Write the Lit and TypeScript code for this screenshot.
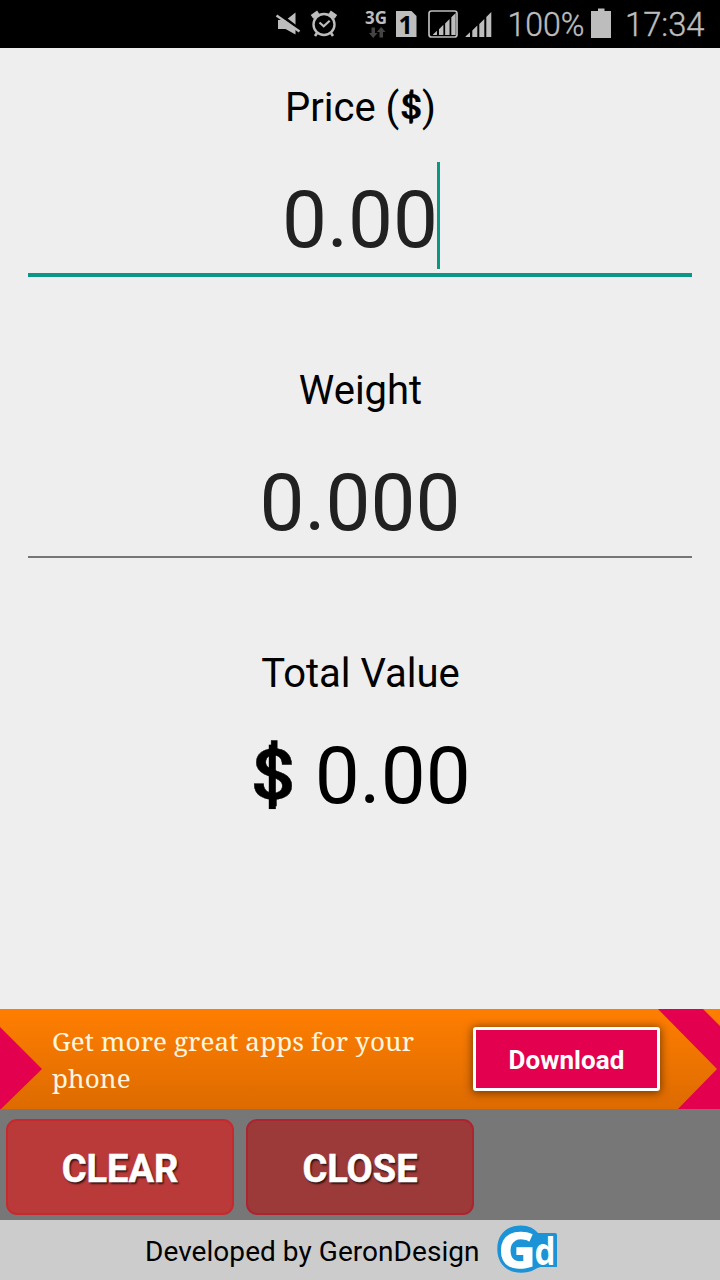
import { LitElement, html, css, svg } from "lit";
import { customElement, property } from "lit/decorators.js";

@customElement("status-bar")
class StatusBar extends LitElement {
  static styles = css`
    :host { display: block; height: 48px; background: #000; }
    svg { display: block; }
    text { fill: #bdbdbd; font-family: Roboto, sans-serif; }
    .big { font-size: 32.5px; font-weight: 300; stroke: #bdbdbd; stroke-width: .4; }
    .net { font: 700 17.500px "Open Sans", sans-serif; }
    .sim { font: 700 25px "Open Sans", sans-serif; fill: #000; }
  `;
  render() {
    const bars = (x: number, y: number, s: number) => svg`
      <g transform="translate(${x} ${y}) scale(${s})" fill="#bdbdbd">
        <path d="M0 25.5V25l4.500-4.200v4.700zM6.800 25.500v-6.500l5-5v11.500zM13.800 25.500v-13l5-5v18zM20.800 25.500v-20l5-5v25z"/>
      </g>`;
    return html`<svg width="720" height="48" viewBox="0 0 720 48">
      <g fill="#bdbdbd">
        <path d="M278 20h8l9.500-7.500v22L285.500 29H278z"/>
        <path d="M278.500 13.500L299.500 29.500" stroke="#000" stroke-width="3"/>
        <path d="M276.500 15.500L299.500 31.500" stroke="#bdbdbd" stroke-width="2.600"/>
      </g>
      <g fill="none" stroke="#bdbdbd">
        <circle cx="324" cy="24.500" r="10.500" stroke-width="2.400"/>
        <path d="M319.500 22.500l4.200 3.800 6-5.500" stroke-width="2.200"/>
        <path d="M312 16.800l6.400-4.300M329.500 12.500l6.400 4.300" stroke-width="4.600"/>
        <path d="M317 33l-2 3M331 33l2 3" stroke-width="2.600"/>
      </g>
      <text class="net" x="365" y="23.500" textLength="22" lengthAdjust="spacingAndGlyphs">3G</text>
      <path fill="#444" d="M371.500 27.500h3.500v5.500h2.500l-4.300 5-4.300-5h2.600zM379.500 37.500h3.500v-5.500h2.500l-4.300-5-4.300 5h2.600z"/>
      <path fill="#bdbdbd" d="M396 11h15.500l5 5v21H396z"/>
      <text class="sim" x="398.500" y="33.500">1</text>
      <rect x="429" y="11" width="28" height="26" rx="2.500" fill="none" stroke="#bdbdbd" stroke-width="1.700"/>
      ${bars(433, 12.5, 0.88)}
      ${bars(465.5, 11.5, 1)}
      <text class="big" x="507.500" y="36" textLength="77" lengthAdjust="spacingAndGlyphs">100%</text>
      <path fill="#bdbdbd" d="M591 11h7V8.500h6.500V11h6.500v27h-20z"/>
      <text class="big" x="625" y="36" textLength="79.500" lengthAdjust="spacingAndGlyphs">17:34</text>
    </svg>`;
  }
}

@customElement("ad-banner")
class AdBanner extends LitElement {
  static styles = css`
    :host { display: block; height: 100px; position: relative; background: linear-gradient(#ff7e00, #dd6b00); }
    .arrows { position: absolute; inset: 0; }
    .row { position: relative; display: flex; justify-content: space-between; padding: 18px 60px 0 52px; }
    .copy { width: 375px; margin-top: -4px; color: #fff6e0; text-align: left; font: 26px/37px "Noto Serif", "DejaVu Serif Condensed", "DejaVu Serif", serif; font-stretch: condensed; letter-spacing: .12px; }
    .button { box-sizing: border-box; width: 187px; height: 64px; border: 3px solid #fff; border-radius: 3px; background: #e2004f; color: #fff; text-align: center; font: 700 26px/60px Roboto, sans-serif; letter-spacing: .1px; box-shadow: 0 1px 8px 1px rgba(60, 30, 0, .65); }
  `;
  render() {
    return html`
      <svg class="arrows" width="720" height="100" viewBox="0 0 720 100">
        <path fill="#e2004f" d="M0 18l42 42-41 40H0zM658 0h45l17 17v83h-42l39-40z"/>
      </svg>
      <div class="row">
        <div class="copy">Get more great apps for your phone</div>
        <div class="button">Download</div>
      </div>`;
  }
}

@customElement("money-field")
class MoneyField extends LitElement {
  @property({ type: Boolean, reflect: true }) active = false;
  static styles = css`
    :host { display: block; height: 283px; }
    .label { height: 48px; padding: 36px 0 0 1px; font-size: 40px; line-height: 48px; }
    .input { box-sizing: border-box; height: 143px; margin: 0 28px; padding-top: 41px; border-bottom: 2px solid #757575; font-size: 80px; line-height: 94px; color: #212121; }
    .caret { display: none; }
    :host([active]) .input { height: 145px; border-bottom: 4px solid #0b9685; }
    :host([active]) .caret { display: inline-block; width: 3px; height: 107px; margin: -20px -2px -20px -1px; vertical-align: -2px; background: #0b9685; }
  `;
  render() {
    return html`<div class="label"><slot name="label"></slot></div>
      <div class="input"><slot></slot><span class="caret"></span></div>`;
  }
}

@customElement("app-root")
class AppRoot extends LitElement {
  static styles = css`
    :host { display: flex; flex-direction: column; width: 720px; height: 1280px; overflow: hidden; background: #eee; color: #000; font-family: Roboto, sans-serif; text-align: center; }
    .main { flex: 1; }
    .dollar { display: inline-block; position: relative; font-weight: 500; transform: translateX(.01em) scaleY(.87); -webkit-text-stroke: .006em #000; }
    .dollar::after { content: ""; position: absolute; left: 50%; top: .135em; width: .085em; height: .925em; margin-left: -.05em; background: #000; }
    .total-label { padding: 36px 0 0 1px; font-size: 40px; line-height: 48px; }
    .total { padding-top: 31px; font-size: 80px; line-height: 94px; }
    .actions { box-sizing: border-box; height: 111px; display: flex; gap: 12px; padding: 10px 6px 5px; background: #777; }
    .action { box-sizing: border-box; width: 228px; height: 96px; border: 2px solid #c62a2f; border-radius: 11px; background: #ba3a39; color: #fff; font-size: 38px; font-weight: 700; line-height: 96px; text-shadow: 1.5px 2px 2px rgba(0, 0, 0, .7); -webkit-text-stroke: .5px #fff; }
    .close { background: #9c3a39; border-color: #ac2430; }
    .footer { height: 60px; display: flex; padding-left: 145px; gap: 16px; background: #ccc; font-size: 28px; line-height: 63px; letter-spacing: .05px; }
    .logo { display: block; overflow: visible; letter-spacing: 0; line-height: 1; }
    .mark { font-family: "Open Sans", sans-serif; font-weight: 700; fill: #fff; }
  `;
  render() {
    return html`
      <status-bar></status-bar>
      <div class="main">
        <money-field active><span slot="label">Price (<span class="dollar">$</span>)</span>0.00</money-field>
        <money-field><span slot="label">Weight</span>0.000</money-field>
        <div class="total-label">Total Value</div>
        <div class="total"><span class="dollar">$</span> 0.00</div>
      </div>
      <ad-banner></ad-banner>
      <div class="actions">
        <div class="action">CLEAR</div>
        <div class="action close">CLOSE</div>
      </div>
      <div class="footer">
        <span>Developed by GeronDesign</span>
        <svg class="logo" width="64" height="60" viewBox="0 0 64 60">
          <path fill="#1b93d6" d="M25 5.500c7.500 0 13.500 3 17 7.500H59q2 0 2 2v32H46c-2 0-4 .5-6 1.800-4 2.500-9 3.900-15 3.900C10 52.700 1.300 43 1.300 29S10 5.500 25 5.500z"/>
          <text class="mark" x="2.800" y="47.500" font-size="49" textLength="37" lengthAdjust="spacingAndGlyphs" stroke="#fff" stroke-width="1.500">G</text>
          <text class="mark" x="38.500" y="45" font-size="37" textLength="21" lengthAdjust="spacingAndGlyphs">d</text>
        </svg>
      </div>`;
  }
}
